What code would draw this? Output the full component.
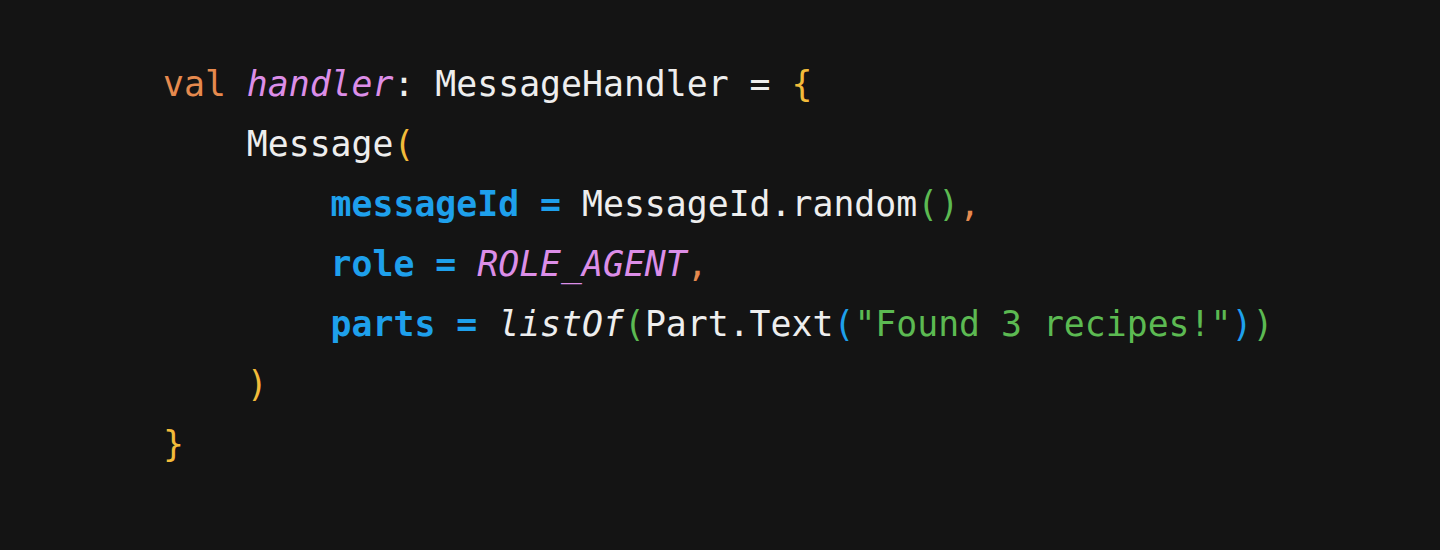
import React from "react";

const K = ({ children }: { children: React.ReactNode }) => (
  <span className="text-[#e68a4e]">{children}</span>
);
const P = ({ children }: { children: React.ReactNode }) => (
  <span className="italic text-[#dc8ee8]">{children}</span>
);
const B = ({ children }: { children: React.ReactNode }) => (
  <span className="font-bold text-[#1ea0ec]">{children}</span>
);
const Bp = ({ children }: { children: React.ReactNode }) => (
  <span className="text-[#1ea0ec]">{children}</span>
);
const G = ({ children }: { children: React.ReactNode }) => (
  <span className="text-[#5cba52]">{children}</span>
);
const Y = ({ children }: { children: React.ReactNode }) => (
  <span className="text-[#f2bb3a]">{children}</span>
);
const I = ({ children }: { children: React.ReactNode }) => (
  <span className="italic text-[#eeeeee]">{children}</span>
);

const App: React.FC = () => {
  return (
    <div className="h-[550px] w-[1440px] bg-[#141414] pl-[163px] pt-[54px]">
      <pre className="font-['DejaVu_Sans_Mono',monospace] text-[34.8px] leading-[60px] text-[#eeeeee]">
        <div>
          <K>val</K> <P>handler</P>: MessageHandler = <Y>{"{"}</Y>
        </div>
        <div>
          {"    "}Message<Y>(</Y>
        </div>
        <div>
          {"        "}
          <B>messageId =</B> MessageId.random<G>()</G>
          <K>,</K>
        </div>
        <div>
          {"        "}
          <B>role =</B> <P>ROLE_AGENT</P>
          <K>,</K>
        </div>
        <div>
          {"        "}
          <B>parts =</B> <I>listOf</I>
          <G>(</G>Part.Text<Bp>(</Bp>
          <G>"Found 3 recipes!"</G>
          <Bp>)</Bp>
          <G>)</G>
        </div>
        <div>
          {"    "}
          <Y>)</Y>
        </div>
        <div>
          <Y>{"}"}</Y>
        </div>
      </pre>
    </div>
  );
};

export default App;
